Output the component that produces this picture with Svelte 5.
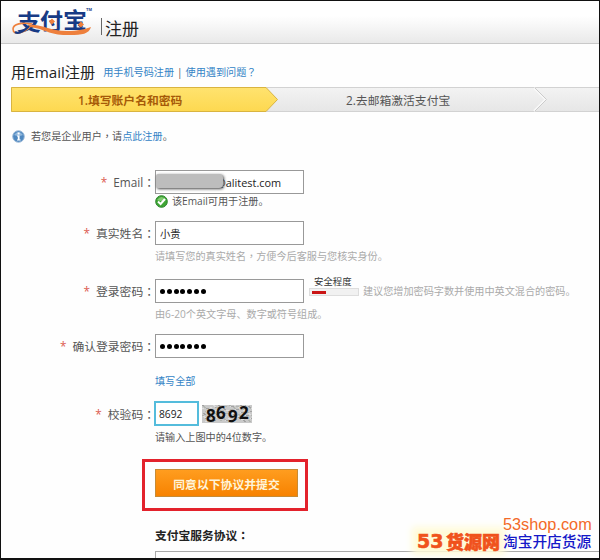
<script lang="ts">
    let email = $state("@alitest.com");
    let realName = $state("小贵");
    let password = $state("1234567");
    let confirmPassword = $state("1234567");
    let code = $state("8692");

    // speckles behind the captcha digits
    let noise = Array.from({ length: 150 }, (_, i) => ({
        x: (i * 17) % 50,
        y: (i * 7 + ((i * i) % 5)) % 17,
        color: ["#a2a2a2", "#dedede", "#b2b5b0"][i % 3]
    }));
</script>

{#snippet label(text)}
    <span class="label"><i>*</i>{text}<span class="colon">：</span></span>
{/snippet}

{#snippet dots(value)}
    <div class="input dots">
        {#each value as _, i (i)}
            <b></b>
        {/each}
    </div>
{/snippet}

<div class="page">
    <header>
        <svg class="logo" width="82" height="34" viewBox="0 -4 82 34">
            <g class="logo-text">
                <text x="5" y="20.5" textLength="24" lengthAdjust="spacingAndGlyphs">支</text>
                <text x="28" y="20" textLength="23" lengthAdjust="spacingAndGlyphs">付</text>
                <text x="51" y="19" textLength="24" lengthAdjust="spacingAndGlyphs">宝</text>
            </g>
            <path d="M20 15 C10 13 1 15 1 20 C1 27 12 24 18 18" fill="none" stroke="#ee803d" stroke-width="1.6" />
            <path d="M15 15.500 C30 15 38 22 55 22 C66 22 73 20 79 18 C77 25 70 26 58 26 C38 27 34 20 18 18 Z" fill="#ee803d" />
            <path d="M3 23 C7 26 12 22 17 17" fill="none" stroke="#173a85" stroke-width="2.2" />
            <path d="M40 9.500 l3 3 -3 3 -3 -3z M69 12.500 l3 3 -3 3 -3 -3z" fill="#ee803d" />
            <text class="tm" x="74" y="2" textLength="6" lengthAdjust="spacingAndGlyphs">TM</text>
        </svg>
        <span class="divider"></span>
        <h1>注册</h1>
    </header>

    <div class="title">
        <h2>用Email注册</h2>
        <a href="#phone">用手机号码注册</a>
        <span>|</span>
        <a href="#help">使用遇到问题<span class="mark">？</span></a>
    </div>

    <div class="steps">
        <svg width="588" height="25">
            <defs>
                <linearGradient id="grey" x2="0" y2="1">
                    <stop offset="0" stop-color="#f3f3f3" />
                    <stop offset="1" stop-color="#e6e6e6" />
                </linearGradient>
                <linearGradient id="yellow" x2="0" y2="1">
                    <stop offset="0" stop-color="#ffe36f" />
                    <stop offset="1" stop-color="#fdd850" />
                </linearGradient>
            </defs>
            <rect width="588" height="25" fill="url(#grey)" />
            <path d="M0 .5 H588 M0 24.5 H588" stroke="#d2d2d2" />
            <path d="M523 1 L534.5 12.5 L523 24" fill="none" stroke="#f8f8f8" stroke-width="2" />
            <path d="M524 1 L535.5 12.5 L524 24" fill="none" stroke="#cbcbcb" />
            <path d="M.5 .5 H255 L266.5 12.5 L255 24.5 H.5Z" fill="url(#yellow)" stroke="#d9b440" />
        </svg>
        <div class="step-names">
            <strong>1.填写账户名和密码</strong>
            <span>2.去邮箱激活支付宝</span>
        </div>
    </div>

    <div class="info">
        <svg width="13" height="13" viewBox="0 0 13 13">
            <circle cx="6.5" cy="6.5" r="5.8" fill="#4f88c0" stroke="#9ebbd8" />
            <path d="M2 5 Q6.500 -1 11 5 Q6.500 7 2 5" fill="#91b7dc" />
            <path d="M5.600 2.500 h2 v2 h-2z M5 5.500 h2.600 v4 h1 v1 H5 v-1 h.8 v-3 H5z" fill="#fff" />
        </svg>
        <p>若您是企业用户<span class="comma">，</span>请<a href="#company">点此注册</a>。</p>
    </div>

    <form>
        <div class="row email">
            {@render label("Email")}
            <div class="field">
                <input type="text" bind:value={email} />
                <span class="mask"></span>
            </div>
        </div>
        <p class="note valid">
            <svg width="13" height="13" viewBox="0 0 13 13">
                <circle cx="6.5" cy="6.5" r="5.800" fill="#3fa535" stroke="#278327" />
                <path d="M2 5 Q6.500 -1 11 5 Q6.500 7 2 5" fill="#80ca70" />
                <path d="M3 6.500 L5.600 9 L10 4" fill="none" stroke="#fff" stroke-width="2" />
            </svg>
            该Email可用于注册。
        </p>

        <div class="row name">
            {@render label("真实姓名")}
            <input type="text" bind:value={realName} />
        </div>
        <p class="note hint">请填写您的真实姓名<span class="comma">，</span>方便今后客服与您核实身份。</p>

        <div class="row password">
            {@render label("登录密码")}
            {@render dots(password)}
            <div class="strength">
                <span>安全程度</span>
                <div class="bar"><div></div></div>
            </div>
            <span class="advice">建议您增加密码字数并使用中英文混合的密码。</span>
        </div>
        <p class="note hint">由6-20个英文字母、数字或符号组成。</p>

        <div class="row confirm">
            {@render label("确认登录密码")}
            {@render dots(confirmPassword)}
        </div>

        <a class="all" href="#all">填写全部</a>

        <div class="row code">
            {@render label("校验码")}
            <input type="text" bind:value={code} />
            <svg class="captcha" width="50" height="18" viewBox="0 0 50 18">
                <rect width="50" height="18" fill="#c9c9c9" />
                {#each noise as n, i (i)}
                    <rect x={n.x} y={n.y} width="2" height="1" fill={n.color} />
                {/each}
                <text x="4" y="17">8</text>
                <text x="14" y="14">6</text>
                <text x="26" y="17" transform="rotate(4 30 10)">9</text>
                <text x="37" y="14">2</text>
            </svg>
        </div>
        <p class="note code-note">请输入上图中的4位数字。</p>

        <div class="submit">
            <button type="button">同意以下协议并提交</button>
        </div>

        <h3>支付宝服务协议<span class="colon">：</span></h3>
        <div class="agreement"></div>
    </form>

    <div class="watermark">
        <span class="brand"><b>53</b>货源网</span>
        <div class="shop">
            <span class="domain">53shop.com</span>
            <span class="slogan">淘宝开店货源</span>
        </div>
    </div>
</div>

<style>
    :global(body) {
        background: #fff;
        overflow: hidden;
    }

    .page {
        position: relative;
        box-sizing: border-box;
        width: 600px;
        height: 560px;
        overflow: hidden;
        border: 1px solid #111;
        border-bottom-width: 2px;
        background: #fefefe;
        color: #555;
        font: 10.15px/14px "Open Sans", "Noto Sans CJK SC", sans-serif;
    }

    h1, h2, h3, p {
        margin: 0;
        font-weight: normal;
    }

    a {
        color: #3484c6;
        text-decoration: none;
    }

    header {
        display: flex;
        box-sizing: border-box;
        height: 43px;
        padding: 4px 0 0 11px;
        border-bottom: 1px solid #c9c9c9;
        background: linear-gradient(#fff 35%, #e9e9e9);
    }

    .logo {
        overflow: visible;
    }

    .logo-text {
        fill: #173a85;
        font: bold 22px "Noto Sans CJK SC", sans-serif;
    }

    .tm {
        fill: #173a85;
        font: bold 4px "Liberation Sans", sans-serif;
    }

    .divider {
        width: 1px;
        height: 17px;
        margin: 13px 3px 0 7px;
        background: #666;
    }

    h1 {
        margin-top: 13px;
        color: #222;
        font-size: 17px;
        line-height: 22px;
    }

    .title {
        display: flex;
        align-items: center;
        height: 20px;
        margin: 18px 0 0 10px;
    }

    .title h2 {
        margin-right: 8px;
        color: #222;
        font-size: 15.2px;
    }

    .title > span {
        margin: 0 3px;
    }

    .steps {
        display: grid;
        width: 588px;
        height: 25px;
        margin: 5px 0 0 10px;
    }

    .steps svg, .step-names {
        grid-area: 1 / 1;
    }

    .step-names {
        display: flex;
        align-items: center;
        font-size: 11.8px;
    }

    .step-names strong {
        width: 268px;
        padding-left: 67px;
        box-sizing: border-box;
        color: #a65a08;
        font-weight: 600;
    }

    .step-names span {
        padding-left: 67px;
    }

    .info {
        display: flex;
        align-items: center;
        gap: 6px;
        height: 16px;
        margin: 16px 0 0 11px;
    }

    .row {
        display: flex;
        align-items: center;
        height: 24px;
    }

    .label {
        width: 154px;
        flex: none;
        text-align: right;
        font-size: 11.8px;
    }

    .label i {
        margin-right: 6px;
        color: #dc5b50;
        font-style: normal;
    }

    .colon, .comma, .mark {
        font-family: "Noto Sans CJK TC", sans-serif;
    }

    input, .input {
        box-sizing: border-box;
        width: 149px;
        height: 24px;
        flex: none;
        padding: 0 4px;
        border: 1px solid #999;
        background: #fff;
        color: #222;
        font: 10.25px "Open Sans", "Noto Sans CJK SC", sans-serif;
        outline: none;
    }

    .email {
        margin-top: 26px;
    }

    .field {
        position: relative;
    }

    .field input {
        display: block;
        padding-left: 60px;
        font-size: 10.9px;
    }

    .mask {
        position: absolute;
        left: 1px;
        top: 4px;
        width: 67px;
        height: 14px;
        border-radius: 2px 4px 4px 2px;
        background: #bdbdbd;
        box-shadow: 1px 1px 3px #444;
    }

    .note {
        display: flex;
        align-items: center;
        height: 16px;
        margin-left: 154px;
    }

    .valid {
        margin-top: -1px;
    }

    .valid svg {
        margin-right: 4px;
    }

    .hint, .advice {
        color: #aaa;
    }

    .name {
        margin-top: 12px;
    }

    .name + .hint {
        margin-top: 3px;
    }

    .password {
        margin-top: 15px;
    }

    .password + .hint {
        margin-top: 3px;
    }

    .dots {
        display: flex;
        align-items: center;
        gap: 1.8px;
    }

    .dots b {
        width: 5px;
        height: 5px;
        border-radius: 50%;
        background: #000;
    }

    .strength {
        width: 50px;
        margin: -10px 4px 0 5px;
        color: #333;
        font-size: 9.4px;
        line-height: 10px;
    }

    .strength span {
        padding-left: 5px;
    }

    .bar {
        box-sizing: border-box;
        height: 8px;
        margin-top: 1px;
        padding: 2px;
        border: 1px solid #ddd;
        background: #f1f1f1;
    }

    .bar div {
        width: 14px;
        height: 3px;
        background: #ca1515;
    }

    .confirm {
        margin-top: 12px;
    }

    .all {
        display: block;
        margin: 16px 0 0 154px;
    }

    .code {
        height: 25px;
        margin-top: 13px;
    }

    .code input {
        width: 45px;
        height: 25px;
        margin-left: -1px;
        padding: 0 3px;
        border: 2px solid #54bcdc;
    }

    .captcha {
        margin-left: 3px;
    }

    .captcha text {
        fill: #111;
        font: bold 17px "Open Sans", sans-serif;
    }

    .code-note {
        margin-top: 3px;
    }

    .submit {
        box-sizing: border-box;
        width: 166px;
        height: 52px;
        margin: 14px 0 0 141px;
        padding: 7px 10px;
        border: 3px solid #e3222c;
    }

    button {
        display: block;
        width: 143px;
        height: 28px;
        padding: 0;
        border: 1px solid #c78b35;
        background: linear-gradient(#ff9d1f, #f78200);
        color: #fff4d8;
        font: bold 11.85px "Noto Sans CJK SC", sans-serif;
    }

    h3 {
        margin: 16px 0 0 154px;
        color: #222;
        font-size: 11.75px;
        font-weight: bold;
        line-height: 16px;
    }

    .agreement {
        height: 20px;
        margin: 8px 0 0 154px;
        border: 1px solid #aaa;
        border-right: 0;
    }

    /* site mark laid over the bottom right corner */
    .watermark {
        position: absolute;
        right: 8px;
        bottom: 8px;
        display: flex;
        align-items: flex-end;
        gap: 3px;
    }

    .brand {
        display: flex;
        color: #f0521c;
        font: 900 18px/18px "Noto Sans CJK SC", sans-serif;
        -webkit-text-stroke: 0.6px #f0521c;
        background: #fffbd8;
        box-shadow: 0 0 7px 5px #fffbd8;
    }

    .brand b {
        width: 29px;
        font: bold 19px/18px "DejaVu Sans", sans-serif;
    }

    .shop {
        display: flex;
        flex-direction: column;
        width: 88px;
        white-space: nowrap;
    }

    .domain {
        color: #f36a28;
        font: 16.3px/16px "Liberation Sans", sans-serif;
    }

    .slogan {
        color: #1518c8;
        font: 500 14.7px/18px "Noto Sans CJK SC", sans-serif;
    }
</style>
